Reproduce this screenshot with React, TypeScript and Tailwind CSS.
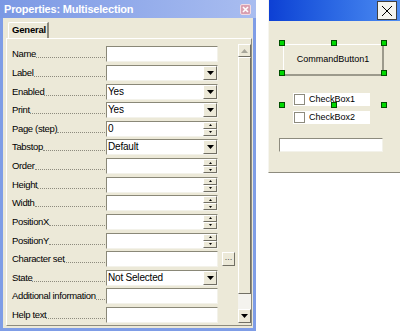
import React from "react";

type Kind = "text" | "combo" | "spin" | "dots";

const rows: { label: string; kind: Kind; value?: string }[] = [
  { label: "Name", kind: "text" },
  { label: "Label", kind: "combo" },
  { label: "Enabled", kind: "combo", value: "Yes" },
  { label: "Print", kind: "combo", value: "Yes" },
  { label: "Page (step)", kind: "spin", value: "0" },
  { label: "Tabstop", kind: "combo", value: "Default" },
  { label: "Order", kind: "spin" },
  { label: "Height", kind: "spin" },
  { label: "Width", kind: "spin" },
  { label: "PositionX", kind: "spin" },
  { label: "PositionY", kind: "spin" },
  { label: "Character set", kind: "dots" },
  { label: "State", kind: "combo", value: "Not Selected" },
  { label: "Additional information", kind: "text" },
  { label: "Help text", kind: "text" },
];

const font = { fontFamily: '"Liberation Sans", Arial, sans-serif' };

const DownTri = () => (
  <svg width="7" height="4" viewBox="0 0 7 4">
    <path d="M0 0h7L3.5 4z" fill="#000" />
  </svg>
);

const UpTri = () => (
  <svg width="7" height="4" viewBox="0 0 7 4">
    <path d="M3.5 0L7 4H0z" fill="#a7a69a" />
  </svg>
);

const Raised = ({ className = "", children }: { className?: string; children?: React.ReactNode }) => (
  <div
    className={`bg-[#ece9d8] border-t border-l border-white border-r border-b border-r-[#716f64] border-b-[#716f64] flex items-center justify-center ${className}`}
  >
    {children}
  </div>
);

const Field = ({ kind, value }: { kind: Kind; value?: string }) => (
  <div className="w-[112px] h-[16px] bg-white border-t border-l border-[#8a8878] border-r border-b border-r-[#f3f2ea] border-b-[#f3f2ea] flex items-center">
    <span className="flex-1 pl-[1px] text-[10px] tracking-[-0.2px] leading-none text-black">{value}</span>
    {kind === "combo" && (
      <Raised className="w-[14px] h-[14px]">
        <DownTri />
      </Raised>
    )}
    {kind === "spin" && (
      <div className="w-[14px] h-[14px] flex flex-col">
        <Raised className="h-[7px]">
          <svg width="3" height="2" viewBox="0 0 3 2">
            <path d="M1.5 0L3 2H0z" fill="#000" />
          </svg>
        </Raised>
        <Raised className="h-[7px]">
          <svg width="3" height="2" viewBox="0 0 3 2">
            <path d="M0 0h3L1.5 2z" fill="#000" />
          </svg>
        </Raised>
      </div>
    )}
  </div>
);

const Handle = ({ x, y }: { x: number; y: number }) => (
  <div
    className="absolute w-[6px] h-[6px] bg-[#00d800] border border-[#004d00]"
    style={{ left: x - 3, top: y - 3 }}
  />
);

export default function App() {
  return (
    <div className="w-[400px] h-[333px] bg-white flex items-start" style={font}>
      {/* Properties window */}
      <div className="w-[256px] h-[331px] bg-[#7f9de6] flex flex-col px-[3px] pb-[3px]">
        <div className="h-[18px] -mx-[3px] px-[4px] bg-gradient-to-r from-[#7b98e4] to-[#a9bdf0] flex items-center justify-between">
          <span className="text-white text-[11px] font-bold tracking-[-0.2px]">Properties: Multiselection</span>
          <div className="w-[11px] h-[11px] rounded-[2px] bg-[#d99fb0] border border-[#f2dbe2] flex items-center justify-center mr-[1px]">
            <svg width="7" height="7" viewBox="0 0 7 7">
              <path d="M1 1l5 5M6 1L1 6" stroke="#fff" strokeWidth="1.6" />
            </svg>
          </div>
        </div>
        <div className="flex-1 bg-[#ece9d8] pl-[3px] pr-[1px] pt-[4px] pb-[2px] flex flex-col">
          <div className="flex pl-[2px]">
            <div className="w-[41px] h-[16px] border-t border-l border-white border-r-2 border-r-[#8d8b7e] rounded-tl-[2px] flex items-center pl-[3px] text-[9.5px] tracking-[-0.2px] font-bold text-black">
              General
            </div>
          </div>
          <div className="flex-1 border-t border-l border-white border-r border-b border-r-[#8d8b7e] border-b-[#8d8b7e] flex">
            <div className="flex flex-col pt-[6px] pl-[5px]">
              {rows.map((r) => (
                <div key={r.label} className="h-[18.64px] flex items-center">
                  <div className="w-[94px] flex items-end pr-[1px] self-center">
                    <span className="text-[9.5px] tracking-[-0.35px] leading-[12px] text-black whitespace-nowrap">{r.label}</span>
                    <span className="flex-1 border-b border-dotted border-[#8d8b7e] mb-[2px]" />
                  </div>
                  <Field kind={r.kind} value={r.value} />
                  <div className="w-[17px] flex justify-end">
                    {r.kind === "dots" && (
                      <Raised className="w-[13px] h-[14px] items-end pb-[3px]">
                        <span className="text-[8px] leading-none text-black">…</span>
                      </Raised>
                    )}
                  </div>
                </div>
              ))}
            </div>
            <div className="ml-[3px] mt-[5px] w-[14px] h-[279px] bg-[#f4f3ee] flex flex-col">
              <Raised className="h-[13px] shrink-0">
                <UpTri />
              </Raised>
              <Raised className="h-[237px] shrink-0" />
              <div className="flex-1" />
              <Raised className="h-[14px] shrink-0">
                <DownTri />
              </Raised>
            </div>
          </div>
        </div>
      </div>

      {/* Form window */}
      <div className="ml-[12px] w-[132px] h-[173px] bg-[#ece9d8] border-l border-[#f6f5ef] border-b border-b-[#8d8b7e] flex flex-col relative">
        <div className="h-[21px] bg-gradient-to-r from-[#0d3fd4] to-[#4e8cf2] flex items-start justify-end pr-[3px] pt-[1px]">
          <div className="w-[20px] h-[19px] bg-[#f4f4f0] border border-[#404040] flex items-center justify-center">
            <svg width="12" height="12" viewBox="0 0 12 12">
              <path d="M1 1l10 10M11 1L1 11" stroke="#000" strokeWidth="1" />
            </svg>
          </div>
        </div>
        <div className="flex flex-col pt-[23px]">
          <div className="ml-[14px] w-[101px] h-[32px] border-t border-l border-white border-r-2 border-b-2 border-r-[#9c9a8c] border-b-[#9c9a8c] flex items-center justify-center text-[9px] text-black">
            CommandButton1
          </div>
          <div className="ml-[24px] mt-[17px] flex flex-col gap-[5px]">
            {["CheckBox1", "CheckBox2"].map((c) => (
              <div key={c} className="w-[77px] h-[13px] bg-white flex items-center pl-[1px]">
                <div className="w-[11px] h-[11px] border border-[#8d8b7e] bg-white" />
                <span className="ml-[4px] text-[9px] leading-none text-black">{c}</span>
              </div>
            ))}
          </div>
          <div className="ml-[10px] mt-[14px] w-[104px] h-[14px] bg-white border-t border-l border-[#8d8b7e] border-r border-b border-r-[#f3f2ea] border-b-[#f3f2ea]" />
        </div>
        <Handle x={13} y={43} />
        <Handle x={65} y={43} />
        <Handle x={115} y={43} />
        <Handle x={13} y={73} />
        <Handle x={115} y={73} />
        <Handle x={13} y={105} />
        <Handle x={65} y={105} />
        <Handle x={115} y={105} />
      </div>
    </div>
  );
}
